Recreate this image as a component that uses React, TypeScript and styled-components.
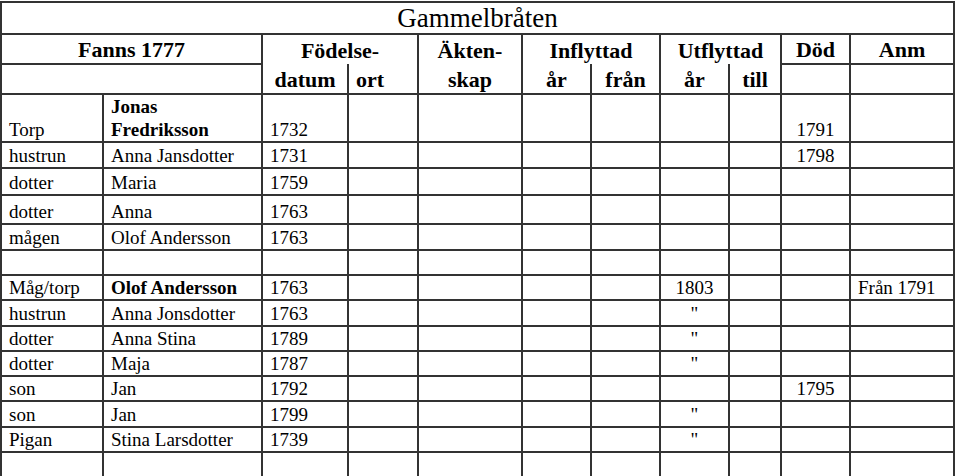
import styled, { createGlobalStyle } from 'styled-components';

const serif =
  "'Liberation Serif', 'Times New Roman', Times, Tinos, 'Nimbus Roman', 'Nimbus Roman No9 L', 'Noto Serif', 'DejaVu Serif', FreeSerif, serif";

const GlobalStyle = createGlobalStyle`
  html, body {
    margin: 0;
    padding: 0;
    background: #ffffff;
  }
  body {
    font-family: ${serif};
    color: #000;
  }
`;

const line = '2px solid #333';

interface rowI {
  role: string;
  name: string;
  born: string;
  utAr?: string;
  dod?: string;
  anm?: string;
  bold?: boolean;
  h: number;
}

const rows: rowI[] = [
  { role: 'Torp', name: 'Jonas\nFredriksson', born: '1732', dod: '1791', bold: true, h: 45 },
  { role: 'hustrun', name: 'Anna Jansdotter', born: '1731', dod: '1798', h: 26 },
  { role: 'dotter', name: 'Maria', born: '1759', h: 27 },
  { role: 'dotter', name: 'Anna', born: '1763', h: 29 },
  { role: 'mågen', name: 'Olof Andersson', born: '1763', h: 26 },
  { role: '', name: '', born: '', h: 25 },
  { role: 'Måg/torp', name: 'Olof Andersson', born: '1763', utAr: '1803', anm: 'Från 1791', bold: true, h: 25 },
  { role: 'hustrun', name: 'Anna Jonsdotter', born: '1763', utAr: '"', h: 26 },
  { role: 'dotter', name: 'Anna Stina', born: '1789', utAr: '"', h: 25 },
  { role: 'dotter', name: 'Maja', born: '1787', utAr: '"', h: 25 },
  { role: 'son', name: 'Jan', born: '1792', dod: '1795', h: 25 },
  { role: 'son', name: 'Jan', born: '1799', utAr: '"', h: 26 },
  { role: 'Pigan', name: 'Stina Larsdotter', born: '1739', utAr: '"', h: 25 },
  { role: '', name: '', born: '', h: 25 },
];

const colWidths = [102, 159, 86, 70, 104, 69, 69, 69, 52, 69, 104];

const Gammelbraten = () => {
  return (
    <Page>
      <GlobalStyle />
      <Sheet>
        <colgroup>
          {colWidths.map((w, i) => (
            <col key={i} style={{ width: w }} />
          ))}
        </colgroup>
        <thead>
          <Row $h={31}>
            <TitleCell colSpan={11}>Gammelbråten</TitleCell>
          </Row>
          <Row $h={30}>
            <HeadCell colSpan={2}>Fanns 1777</HeadCell>
            <HeadCell colSpan={2} $open>
              Födelse-
            </HeadCell>
            <HeadCell $open>Äkten-</HeadCell>
            <HeadCell colSpan={2} $open>
              Inflyttad
            </HeadCell>
            <HeadCell colSpan={2} $open>
              Utflyttad
            </HeadCell>
            <HeadCell>Död</HeadCell>
            <HeadCell>Anm</HeadCell>
          </Row>
          <Row $h={30}>
            <HeadCell colSpan={2} />
            <HeadCell>datum</HeadCell>
            <HeadCell $start>ort</HeadCell>
            <HeadCell>skap</HeadCell>
            <HeadCell>år</HeadCell>
            <HeadCell>från</HeadCell>
            <HeadCell>år</HeadCell>
            <HeadCell>till</HeadCell>
            <HeadCell />
            <HeadCell />
          </Row>
        </thead>
        <tbody>
          {rows.map((r, i) => (
            <Row key={i} $h={r.h}>
              <Cell>{r.role}</Cell>
              <Cell $bold={r.bold} $tall={r.h > 40}>
                {r.name}
              </Cell>
              <Cell>{r.born}</Cell>
              <Cell />
              <Cell />
              <Cell />
              <Cell />
              <Cell $center>{r.utAr}</Cell>
              <Cell />
              <Cell $center>{r.dod}</Cell>
              <Cell>{r.anm}</Cell>
            </Row>
          ))}
        </tbody>
      </Sheet>
    </Page>
  );
};

const Page = styled.div`
  width: 959px;
  height: 476px;
  padding: 1px 0 0 0;
  box-sizing: border-box;
  overflow: hidden;
  font-family: ${serif};
`;

const Sheet = styled.table`
  table-layout: fixed;
  width: 955px;
  border-collapse: collapse;
  border: ${line};
  font-family: ${serif};
`;

const Row = styled.tr<{ $h: number }>`
  height: ${props => props.$h}px;
`;

const TitleCell = styled.th`
  border: ${line};
  padding: 0;
  font-family: ${serif};
  font-size: 27px;
  font-weight: 400;
  line-height: 30px;
  text-align: center;
  vertical-align: bottom;
`;

const HeadCell = styled.th<{ $open?: boolean; $start?: boolean }>`
  border: ${line};
  border-bottom: ${props => (props.$open ? 'hidden' : line)};
  padding: 0 0 1px ${props => (props.$start ? '7px' : '0')};
  font-family: ${serif};
  font-size: 22px;
  font-weight: 700;
  line-height: 25px;
  text-align: ${props => (props.$start ? 'left' : 'center')};
  vertical-align: bottom;
  white-space: nowrap;
`;

const Cell = styled.td<{ $bold?: boolean; $center?: boolean; $tall?: boolean }>`
  border: ${line};
  padding: 0 0 0 ${props => (props.$center ? '0' : '7px')};
  font-family: ${serif};
  font-size: 19px;
  font-weight: ${props => (props.$bold ? 700 : 400)};
  line-height: ${props => (props.$tall ? '23px' : '22px')};
  text-align: ${props => (props.$center ? 'center' : 'left')};
  vertical-align: bottom;
  white-space: pre-line;
`;

export default Gammelbraten;
